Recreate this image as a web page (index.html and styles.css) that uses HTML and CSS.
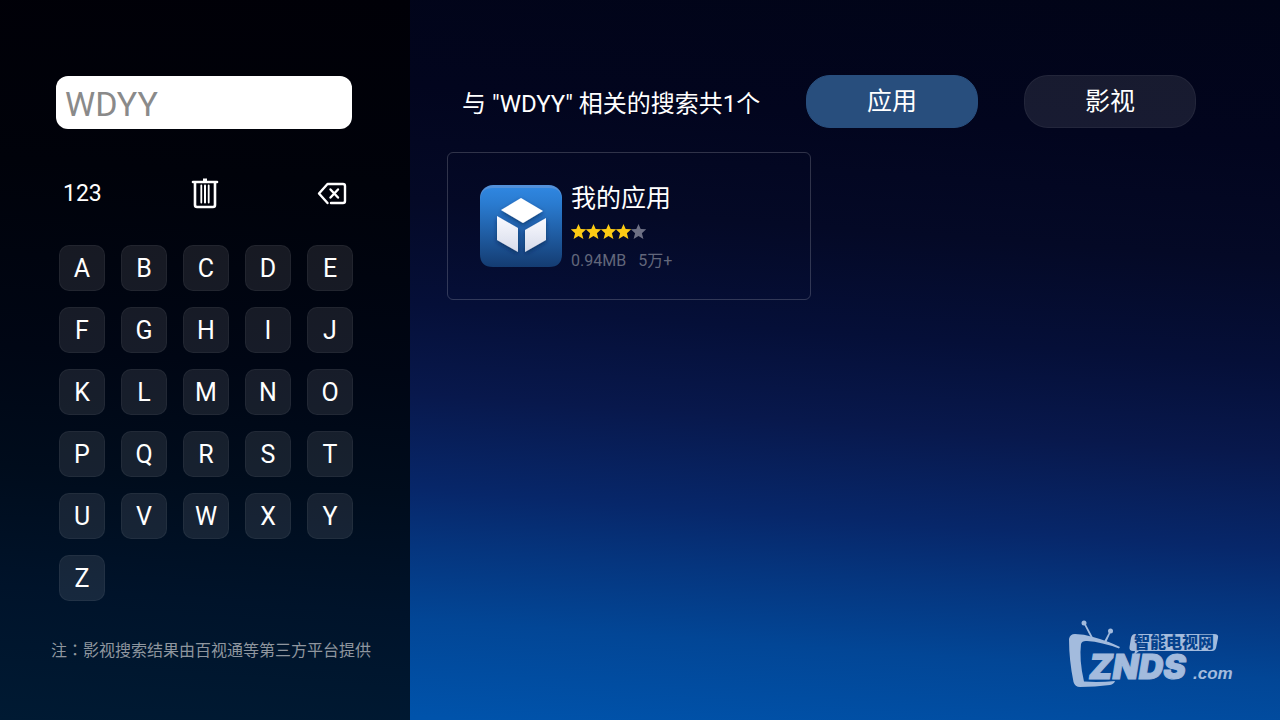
FILE: index.html
```html
<!DOCTYPE html>
<html lang="zh-CN">
<head>
    <meta charset="UTF-8">
    <meta name="viewport" content="width=device-width, initial-scale=1.0">
    <title>搜索</title>
    <link rel="stylesheet" href="styles.css">
</head>
<body>
    <aside class="sidebar">
        <input class="search-box" type="text" placeholder="WDYY" aria-label="搜索">

        <div class="tools">
            <button class="tool" type="button">123</button>
            <button class="tool" type="button" aria-label="清空">
                <svg width="28" height="32" viewBox="0 0 28 32" fill="none" stroke="#fff">
                    <path d="M2 5h24" stroke-width="2.6" stroke-linecap="round"/>
                    <path d="M14 1.500v3" stroke-width="4"/>
                    <path d="M4 6v22q0 2 2 2h16q2 0 2-2V6" stroke-width="2.600"/>
                    <path d="M10.300 8.500v17M17.700 8.500v17" stroke-width="1.800" stroke-linecap="round"/>
                    <path d="M14 8.500v17" stroke-width="2" stroke-linecap="round"/>
                </svg>
            </button>
            <button class="tool" type="button" aria-label="删除">
                <svg width="30" height="24" viewBox="0 0 30 24" fill="none" stroke="#fff" stroke-width="2.4" stroke-linecap="round" stroke-linejoin="round">
                    <path d="M10.500 22L2 12.500l8.500-9.500H26q2 0 2 2v15q0 2-2 2H14"/>
                    <path d="M13.500 8.500l7.500 8M21 8.500l-7.500 8"/>
                </svg>
            </button>
        </div>

        <div class="keyboard">
            <button class="key" type="button">A</button>
            <button class="key" type="button">B</button>
            <button class="key" type="button">C</button>
            <button class="key" type="button">D</button>
            <button class="key" type="button">E</button>
            <button class="key" type="button">F</button>
            <button class="key" type="button">G</button>
            <button class="key" type="button">H</button>
            <button class="key" type="button">I</button>
            <button class="key" type="button">J</button>
            <button class="key" type="button">K</button>
            <button class="key" type="button">L</button>
            <button class="key" type="button">M</button>
            <button class="key" type="button">N</button>
            <button class="key" type="button">O</button>
            <button class="key" type="button">P</button>
            <button class="key" type="button">Q</button>
            <button class="key" type="button">R</button>
            <button class="key" type="button">S</button>
            <button class="key" type="button">T</button>
            <button class="key" type="button">U</button>
            <button class="key" type="button">V</button>
            <button class="key" type="button">W</button>
            <button class="key" type="button">X</button>
            <button class="key" type="button">Y</button>
            <button class="key" type="button">Z</button>
        </div>

        <p class="note">注<span class="colon" lang="zh-TW">：</span>影视搜索结果由百视通等第三方平台提供</p>
    </aside>

    <main class="results">
        <header class="results-header">
            <h1>与 "WDYY" 相关的搜索共1个</h1>
            <nav class="tabs">
                <button class="tab active" type="button">应用</button>
                <button class="tab" type="button">影视</button>
            </nav>
        </header>

        <div class="app-list">
            <a class="app-card" href="#">
                <svg class="app-icon" width="82" height="82" viewBox="0 0 82 82">
                    <defs>
                        <linearGradient id="iconBg" x1="0" y1="0" x2="0" y2="1">
                            <stop offset="0" stop-color="#2f86e0"/>
                            <stop offset=".2" stop-color="#2a7bd0"/>
                            <stop offset="1" stop-color="#143c72"/>
                        </linearGradient>
                        <linearGradient id="iconFace" x1="0" y1="0" x2="0" y2="1">
                            <stop offset="0" stop-color="#fafaff"/>
                            <stop offset="1" stop-color="#d6dbea"/>
                        </linearGradient>
                        <filter id="iconShadow" x="-20%" y="-20%" width="140%" height="150%">
                            <feDropShadow dx="0" dy="2" stdDeviation="2" flood-color="#04204a" flood-opacity=".6"/>
                        </filter>
                    </defs>
                    <rect width="82" height="60" rx="13" fill="#5391da"/>
                    <path d="M0 16Q0 3 13 3h56q13 0 13 13v53q0 13-13 13H13Q0 82 0 69z" fill="url(#iconBg)"/>
                    <g filter="url(#iconShadow)">
                        <path d="M41 13l22 13-20 12L21 25z" fill="#fff"/>
                        <path d="M17 31l21 12v24L17 55z" fill="url(#iconFace)"/>
                        <path d="M66 33v22L45 67V45z" fill="url(#iconFace)"/>
                    </g>
                </svg>
                <div class="app-info">
                    <h2>我的应用</h2>
                    <svg class="stars" width="76" height="16" viewBox="0 0 76 16" role="img" aria-label="4 星">
                        <defs>
                            <path id="star" d="M7.500 0l2.200 5 5.500.3-4.300 3.900 1.500 5.800-4.900-3-4.900 3 1.500-5.800L-.2 5.300 5.300 5z"/>
                        </defs>
                        <g fill="#fccb14">
                            <use href="#star"/>
                            <use href="#star" x="15"/>
                            <use href="#star" x="30"/>
                            <use href="#star" x="45"/>
                        </g>
                        <use href="#star" x="60" fill="#6d7084"/>
                    </svg>
                    <p class="meta"><span>0.94MB</span><span>5万+</span></p>
                </div>
            </a>
        </div>
    </main>

    <svg class="watermark" width="168" height="72" viewBox="0 0 168 72" role="img" aria-label="ZNDS 智能电视网">
        <g fill="#a3bbdd">
            <circle cx="18" cy="7" r="2.500"/>
            <circle cx="44.500" cy="15" r="2.500"/>
            <path d="M17.300 7l1.500-.7 8.500 16-2.500-.8zM43.700 15l1.400.6-5 11-2-1z"/>
            <path d="M3 23Q4 18 9 18Q18 18 27 21Q42 25 54 31l-1 1.500Q36 26 21 25Q16 24.500 15 28Q13 44 18 65.500q15 1 31-.5Q48 68 44 69q-15 2-30 2-5 0-6.500-5Q3 44 3 23z"/>
            <path d="M69 18h79q5 0 4 4l-2 10q-1 3-4 3H73l-5 4 1-4h-2q-4 0-3.500-4l1.500-9q1-4 4-4z"/>
        </g>
        <text class="mark-cn" x="68" y="32">智能电视网</text>
        <text class="mark-name" x="23" y="63">ZNDS</text>
        <text class="mark-com" x="127" y="63">.com</text>
    </svg>
</body>
</html>
```

FILE: styles.css
```css
* {
    box-sizing: border-box;
}
body {
    margin: 0;
    min-height: 100vh;
    display: flex;
    position: relative;
    font-family: Roboto, "Noto Sans CJK SC", sans-serif;
    color: #fff;
    background: linear-gradient(4deg, #0053ab 4%, #024696 16%, #05357e 25%, #07276a 32%, #08184c 44%, #050f38 55%, #040926 68%, #02051e 82%, #010417 100%);
}
button {
    font-family: inherit;
    color: inherit;
    padding: 0;
    cursor: pointer;
}
svg {
    display: block;
}

/* left: search keyboard */
.sidebar {
    width: 410px;
    padding: 76px 36px 0 51px;
    background: linear-gradient(4deg, #001a33, #00132a 18%, #000c1c 34%, #000614 50%, #00020a 75%, #000007);
}
.search-box {
    display: block;
    width: 296px;
    height: 53px;
    margin-left: 5px;
    padding: 2px 9px 0;
    border: 0;
    border-radius: 12px;
    background: #fff;
    font-family: inherit;
    font-size: 34px;
    color: #333;
}
.search-box::placeholder {
    color: #8a8a8a;
}
.tools {
    display: grid;
    grid-template-columns: 1fr auto 1fr;
    align-items: center;
    width: 284px;
    height: 32px;
    margin: 48px 0 0 12px;
}
.tool {
    justify-self: start;
    border: 0;
    background: none;
    font-size: 23px;
}
.tool:last-child {
    justify-self: end;
}
.keyboard {
    display: grid;
    grid-template-columns: repeat(5, 46px);
    gap: 16px;
    margin: 36px 0 0 8px;
}
.key {
    height: 46px;
    border: 1px solid rgba(255, 255, 255, 0.05);
    border-radius: 10px;
    background: rgba(255, 255, 255, 0.09);
    font-size: 25px;
}
.note {
    margin: 38px 0 0;
    font-size: 16px;
    line-height: 24px;
    white-space: nowrap;
    color: #8f969f;
}
.colon {
    font-family: "Noto Sans CJK TC", sans-serif;
    line-height: 16px;
}

/* right: results */
.results {
    flex: 1;
    padding: 75px 37px 0;
}
.results-header {
    display: flex;
    height: 53px;
    padding-left: 15px;
}
h1 {
    margin: 0;
    width: 344px;
    font-size: 24px;
    line-height: 58px;
    font-weight: normal;
    white-space: nowrap;
}
.tabs {
    display: flex;
    gap: 46px;
}
.tab {
    width: 172px;
    padding-bottom: 6px;
    border: 1px solid rgba(255, 255, 255, 0.05);
    border-radius: 24px;
    background: rgba(255, 255, 255, 0.09);
    font-size: 25px;
}
.tab.active {
    border-color: #284e7d;
    background: #284e7d;
}
.app-list {
    display: grid;
    grid-template-columns: repeat(auto-fill, 364px);
    gap: 24px;
    margin-top: 24px;
}
.app-card {
    display: flex;
    align-items: center;
    gap: 9px;
    height: 148px;
    padding: 0 32px;
    border: 1px solid rgba(255, 255, 255, 0.18);
    border-radius: 6px;
    color: inherit;
    text-decoration: none;
}
.app-info {
    padding-top: 4px;
}
h2 {
    margin: 0;
    font-size: 25px;
    line-height: 32px;
    font-weight: normal;
}
.stars {
    margin: 9px 0 8px;
}
.meta {
    display: flex;
    gap: 12px;
    margin: 0;
    font-size: 16px;
    line-height: 26px;
    color: #62677b;
}

/* site mark over the bottom corner */
.watermark {
    position: absolute;
    right: 46px;
    bottom: 32px;
}
.mark-cn {
    font: 900 16px "Noto Sans CJK SC", sans-serif;
    fill: #05418c;
}
.mark-name {
    font: italic 900 34px Inter, sans-serif;
    fill: #a3bbdd;
    stroke: #a3bbdd;
    stroke-width: 1px;
}
.mark-com {
    font: italic bold 17px "Liberation Sans", sans-serif;
    fill: #a3bbdd;
}
```
